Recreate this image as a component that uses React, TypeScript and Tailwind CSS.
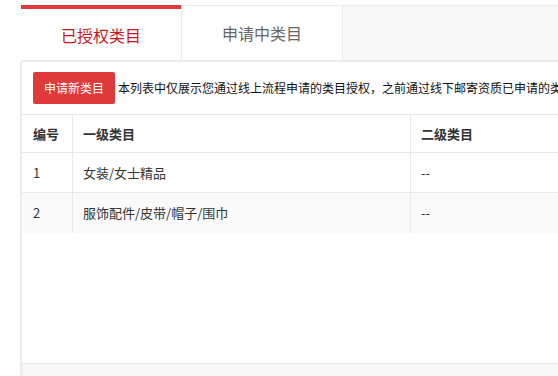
import React from 'react'

const rows = [
  { id: 1, first: '女装/女士精品', second: '--' },
  { id: 2, first: '服饰配件/皮带/帽子/围巾', second: '--' },
]

export default function App() {
  return (
    <div
      className="h-[376px] w-[558px] overflow-hidden bg-white pl-[20px] pt-[5px] text-[#333]"
      style={{ fontFamily: '"Noto Sans CJK SC", "Noto Sans", sans-serif' }}
    >
      <div className="w-[760px]">
        <div className="ml-px flex h-[57px] border-b-2 border-[#ebebeb]">
          <div className="flex w-[160px] items-center justify-center border-t-4 border-[#e03a3a] bg-white text-[16px] text-[#c8161d]">
            已授权类目
          </div>
          <div className="flex w-[162px] items-center justify-center border-x border-t border-[#ebebeb] bg-white text-[16px] text-[#666]">
            申请中类目
          </div>
          <div className="flex-1 border-t border-[#ebebeb] bg-[#f8f8f8]" />
        </div>

        <div className="flex h-[314px] flex-col border-l-2 border-[#ececec]">
          <div className="h-[302px] border-b border-[#e8e8e8] bg-white">
            <div className="flex items-center gap-[3px] px-[11px] py-[10px]">
              <button className="h-[32px] rounded-[2px] bg-[#e0393a] px-[11px] text-[12px] text-white">
                申请新类目
              </button>
              <span className="whitespace-nowrap text-[12px] text-[#111]">
                本列表中仅展示您通过线上流程申请的类目授权，之前通过线下邮寄资质已申请的类目不在此展示
              </span>
            </div>

            <div className="border-t border-[#e8e8e8] text-[13px]">
              <div className="grid h-[38px] grid-cols-[51px_338px_370px] border-b border-[#e8e8e8] font-semibold">
                <div className="flex items-center border-r border-[#e8e8e8] pl-[11px]">编号</div>
                <div className="flex items-center border-r border-[#e8e8e8] pl-[10px]">一级类目</div>
                <div className="flex items-center pl-[10px]">二级类目</div>
              </div>
              {rows.map((row, i) => (
                <div
                  key={row.id}
                  className={
                    i % 2 === 1
                      ? 'grid h-[40px] grid-cols-[51px_338px_370px] bg-[#fafafa]'
                      : 'grid h-[40px] grid-cols-[51px_338px_370px] border-b border-[#e8e8e8] bg-white'
                  }
                >
                  <div className="flex items-center border-r border-[#e8e8e8] pl-[11px]">{row.id}</div>
                  <div className="flex items-center border-r border-[#e8e8e8] pl-[10px]">{row.first}</div>
                  <div className="flex items-center pl-[10px]">{row.second}</div>
                </div>
              ))}
            </div>
          </div>
          <div className="flex-1 border-l border-[#eeeeee] bg-[#f8f8f8]" />
        </div>
      </div>
    </div>
  )
}
